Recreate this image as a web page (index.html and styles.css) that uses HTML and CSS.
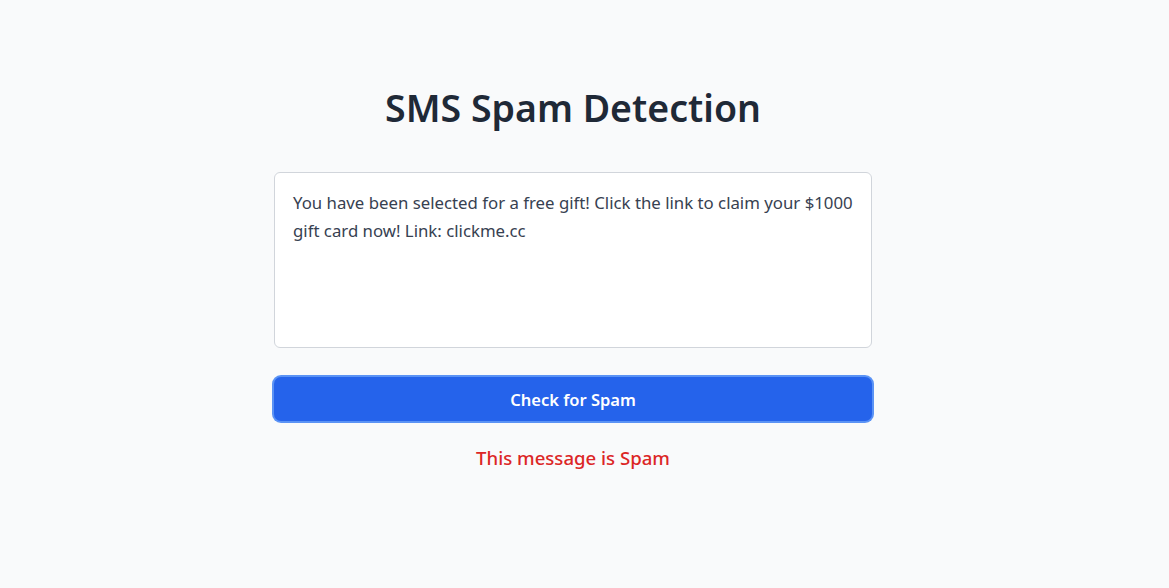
FILE: index.html
```html
<!DOCTYPE html>
<html lang="en">
<head>
<meta charset="utf-8">
<title>SMS Spam Detection</title>
<link rel="stylesheet" href="styles.css">
</head>
<body>
<main class="page">
  <div class="container">
    <h1 class="title">SMS Spam Detection</h1>
    <textarea class="message" rows="5">You have been selected for a free gift! Click the link to claim your $1000 gift card now! Link: clickme.cc</textarea>
    <button class="check-btn" type="button">Check for Spam</button>
    <p class="result">This message is Spam</p>
  </div>
</main>
</body>
</html>
```

FILE: styles.css
```css
* { box-sizing: border-box; }
html, body { margin: 0; padding: 0; }
body {
  background: #f9fafb;
  font-family: "Noto Sans", "Open Sans", sans-serif;
  color: #1f2937;
  min-height: 100vh;
}
.page {
  display: flex;
  justify-content: center;
  padding: 84px 23px 0 0;
}
.container {
  width: 602px;
  display: flex;
  flex-direction: column;
  align-items: center;
}
.title {
  margin: 0 0 40px;
  font-size: 37.5px;
  line-height: 48px;
  font-weight: 600;
  color: #1f2937;
}
.message {
  width: 598px;
  height: 176px;
  padding: 16px 8px 16px 18px;
  border: 1px solid #d1d5db;
  border-radius: 6px;
  background: #fff;
  font-family: inherit;
  font-size: 16.8px;
  line-height: 28px;
  color: #374151;
  resize: none;
  outline: none;
  overflow: hidden;
}
.check-btn {
  margin-top: 29px;
  width: 598px;
  height: 44px;
  border: none;
  border-radius: 7px;
  background: #2563eb;
  color: #fff;
  font-family: inherit;
  font-size: 16.5px;
  font-weight: 600;
  box-shadow: 0 0 0 2px #5b93f5;
  cursor: pointer;
}
.result {
  margin: 23px 0 0;
  font-size: 18.6px;
  line-height: 28px;
  font-weight: 500;
  color: #dc2626;
}
```
